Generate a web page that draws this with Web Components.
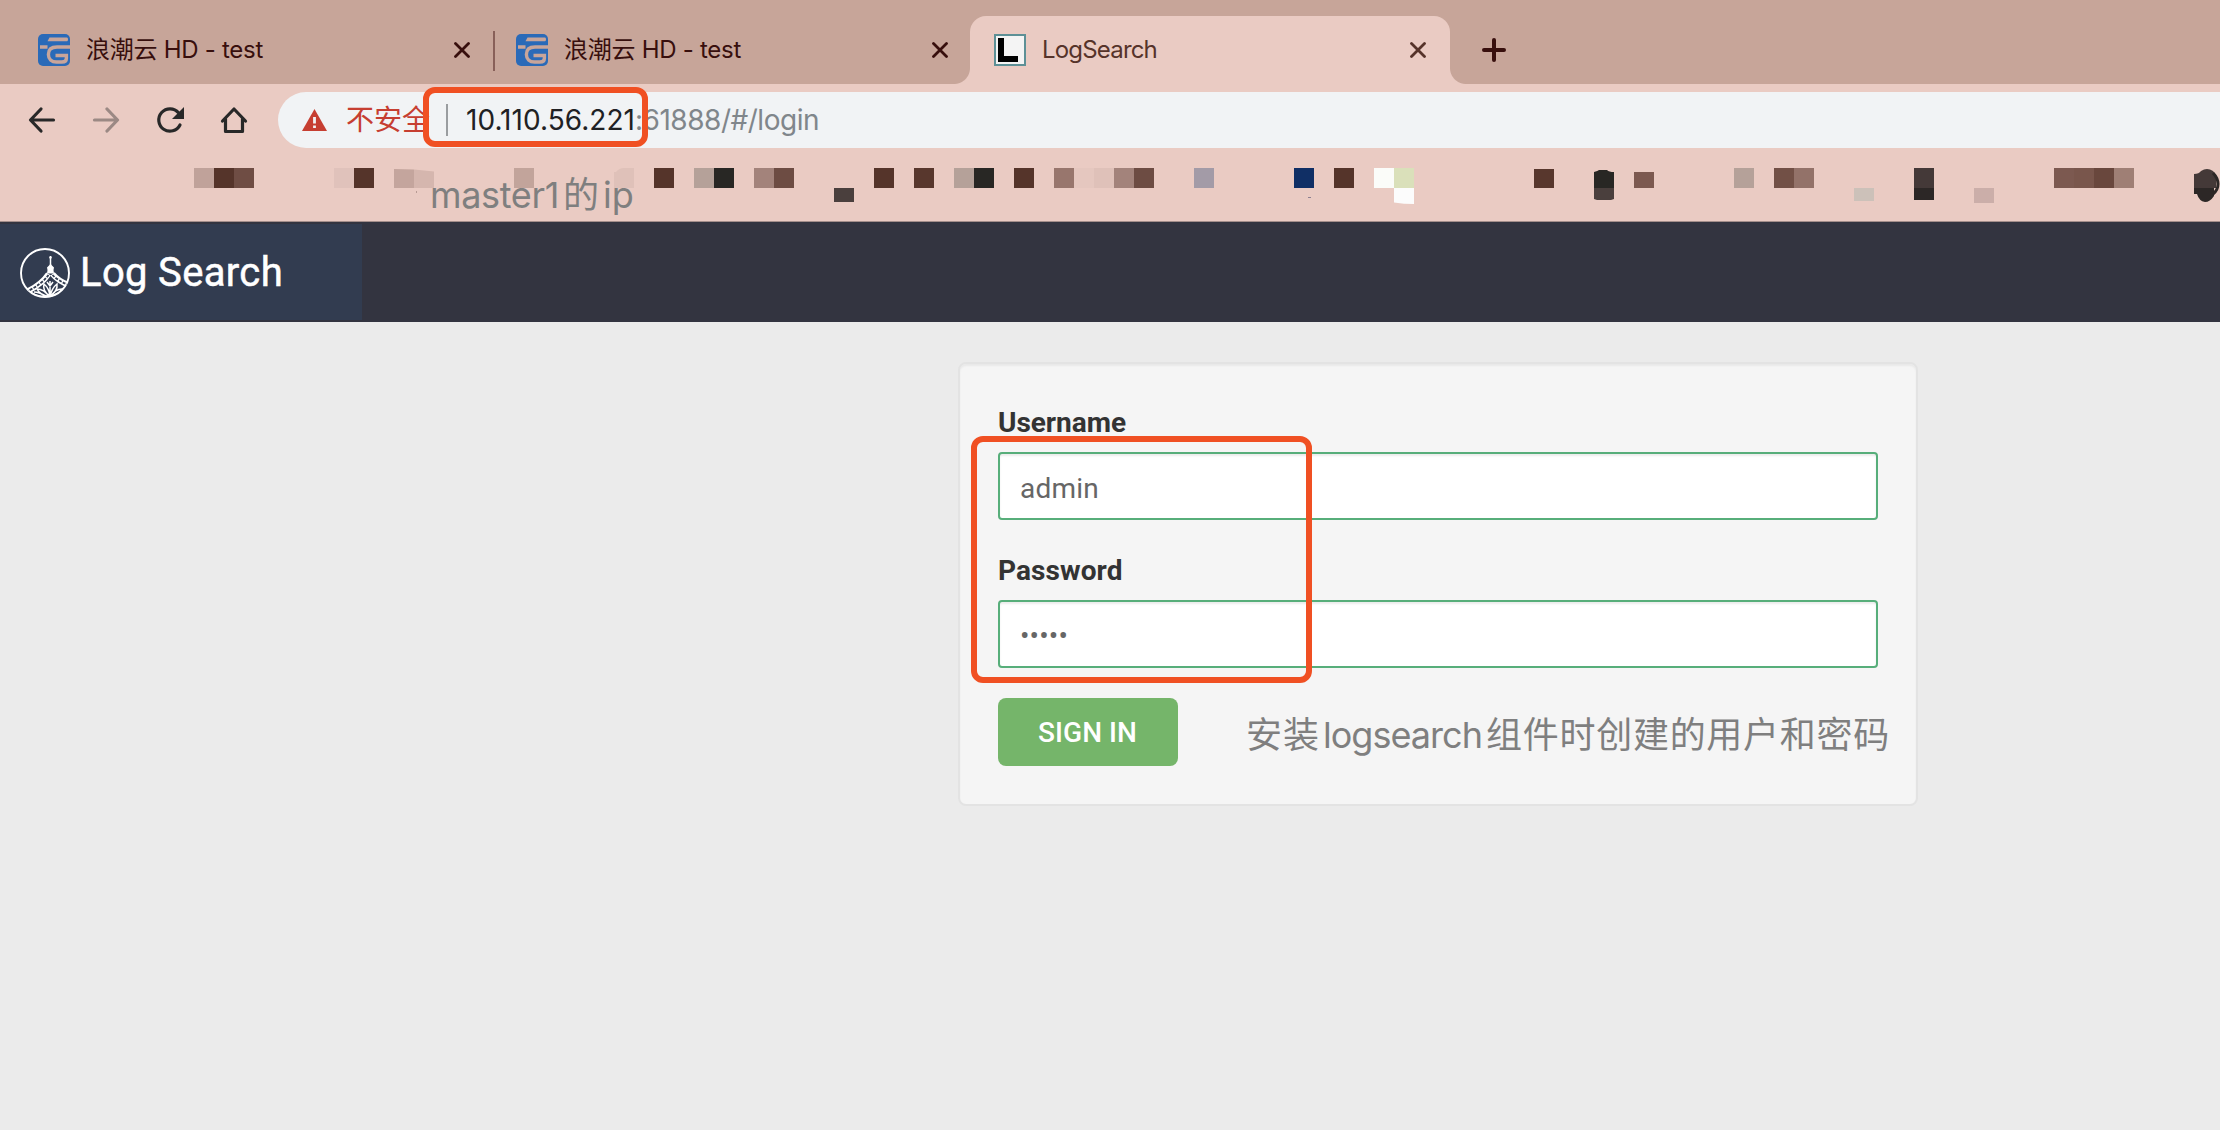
<!DOCTYPE html>
<html lang="zh-CN">
<head>
<meta charset="utf-8">
<title>LogSearch</title>
<style>
html,body{margin:0;height:100%;overflow:hidden;background:#ebebeb}
body{font-family:Inter,"Noto Sans CJK SC",sans-serif}
</style>
</head>
<body>
<log-search-screen></log-search-screen>
<script>
const define = (name, css, html, setup) => {
  const t = document.createElement('template');
  t.innerHTML = `<style>${css}</style>${html}`;
  customElements.define(name, class extends HTMLElement {
    connectedCallback() {
      if (this.shadowRoot) return;
      this.attachShadow({mode: 'open'}).append(t.content.cloneNode(true));
      if (setup) setup(this, this.shadowRoot);
    }
  });
};

/* Text run tracked out to the width given in its "w" attribute. */
define('fit-text', ':host{display:inline-block;white-space:pre;flex:none}', '<slot></slot>', el => {
  const w = parseFloat(el.getAttribute('w'));
  const n = [...el.textContent].length;
  const own = el.getBoundingClientRect().width;
  if (w && own) { el.style.letterSpacing = ((w - own) / n) + 'px'; el.style.width = w + 'px'; }
});

define('cloud-icon', ':host{display:block;width:32px;height:32px;flex:none}svg{display:block}',
 `<svg width="32" height="32" viewBox="0 0 32 32"><rect width="32" height="32" rx="5" fill="#2a6ab8"/>
  <g fill="none" stroke="#c8a59a" stroke-width="3.4"><path d="M2 13H9.5M32 13H19C13 13 10.4 16 10.4 20.500S13.500 28 18.500 28H24C27 28 28.400 26.500 28.400 24.200V21.500H17.500"/></g>
  <path d="M11.500 3.500H29Q30 3.500 30 5.300T29 7.200H9.500Z" fill="#c8a59a"/></svg>`);

define('letter-icon', ':host{display:block;width:32px;height:32px;flex:none}svg{display:block}',
 `<svg width="32" height="32" viewBox="0 0 32 32"><rect x="1" y="1" width="30" height="30" fill="#f4f4f4" stroke="#5d9096" stroke-width="2"/><path d="M4 4H10V22H24V28H4Z" fill="#000"/></svg>`);

define('browser-tab', `
 :host{display:flex;align-items:center;box-sizing:border-box;height:68px;flex:none;color:#380f0d;font-size:24px;line-height:68px;position:relative}
 :host([active]){background:#eacbc3;border-radius:16px 16px 0 0;color:#56332a}
 .foot{display:none;position:absolute;bottom:0;width:16px;height:16px}
 :host([active]) .foot{display:block}
 .l{left:-16px;background:radial-gradient(circle at 0 0,transparent 15.5px,#eacbc3 16.5px)}
 .r{right:-16px;background:radial-gradient(circle at 100% 0,transparent 15.5px,#eacbc3 16.5px)}
 .x{margin-left:auto;display:block}`,
 `<slot></slot><svg class="x" width="16" height="16" viewBox="0 0 16 16"><path d="M1.500 1.500L14.500 14.500M14.500 1.500L1.500 14.500" stroke="currentColor" stroke-width="2.800" stroke-linecap="round"/></svg><i class="foot l"></i><i class="foot r"></i>`);

define('tab-strip', `
 :host{display:flex;align-items:flex-end;height:84px;background:#c7a599}
 browser-tab{padding:0 24px 0 24px}
 .first{width:493px;padding-left:38px;padding-right:23px}
 .second{width:477px;padding-left:23px;padding-right:22px}
 .third{width:480px}
 .sep{width:2px;height:40px;background:#886059;flex:none;margin:0 -2px 13px 0;z-index:1}
 .plus{margin:0 0 22px 32px}`,
 `<browser-tab class="first"><cloud-icon></cloud-icon><fit-text w="177" style="margin-left:16px">浪潮云 HD - test</fit-text></browser-tab>
  <i class="sep"></i>
  <browser-tab class="second"><cloud-icon></cloud-icon><fit-text w="177" style="margin-left:16px">浪潮云 HD - test</fit-text></browser-tab>
  <browser-tab class="third" active><letter-icon></letter-icon><fit-text w="115" style="margin-left:16px">LogSearch</fit-text></browser-tab>
  <svg class="plus" width="24" height="24" viewBox="0 0 24 24"><path d="M12 2V22M2 12H22" stroke="#380f0d" stroke-width="4" stroke-linecap="round"/></svg>`);

define('address-bar', `
 :host{display:flex;align-items:center;flex:1;height:56px;box-sizing:border-box;padding-left:24px;background:#f1f3f5;border-radius:28px 0 0 28px;font-size:28px;line-height:56px;color:#202124}
 .warn{color:#c63e31;margin-left:19px}
 .rest{color:#80868b}
 .sep{width:2px;height:32px;background:#9a9da0;margin:0 18px 0 16px}`,
 `<svg width="25" height="22" viewBox="0 0 25 22"><path d="M12.500 0L25 22H0Z" fill="#c63e31"/><path d="M12.500 8V14.500M12.500 16.500V19" stroke="#f1f3f5" stroke-width="2.800"/></svg>
  <fit-text class="warn" w="84">不安全</fit-text><i class="sep"></i>
  <fit-text w="169">10.110.56.221</fit-text><fit-text class="rest" w="184">:61888/#/login</fit-text>`);

define('nav-bar', `
 :host{display:flex;align-items:center;height:72px;background:#eacbc3;padding-left:24px}
 svg{display:block;margin-right:28px;flex:none}
 address-bar{margin-left:-2px}
 path.s{fill:none;stroke:#282828;stroke-width:3.200;stroke-linecap:round;stroke-linejoin:round}`,
 `<svg width="36" height="36" viewBox="0 0 36 36"><path class="s" d="M29.500 18H7M17 7L6.500 18L17 29"/></svg>
  <svg width="36" height="36" viewBox="0 0 36 36" opacity=".4"><path class="s" d="M6.500 18H29M19 7L29.500 18L19 29"/></svg>
  <svg width="36" height="36" viewBox="0 0 36 36"><path class="s" d="M28 23A11.200 11.200 0 1 1 26.500 10.700"/><path d="M32 5V17H20Z" fill="#282828"/></svg>
  <svg width="36" height="36" viewBox="0 0 36 36"><path class="s" d="M6.500 19L18 7L29.500 19M9.500 17V29.500H26.500V17" stroke-linejoin="miter"/></svg>
  <address-bar></address-bar>`);

/* Bookmarks hidden behind 20px mosaic tiles: x, colour, y, height. */
define('bookmark-bar', ':host{display:block;height:65px;background:#eacbc3;border-bottom:1px solid #a48e8b}svg{display:block}',
 '<svg width="2220" height="65" viewBox="0 156 2220 65"></svg>', (el, root) => {
  const tiles = [
   [194,'#c0a29a'],[214,'#55342a'],[234,'#6f4d44'],[334,'#e0c2bb'],[354,'#55342a'],
   [514,'#c2a49b'],[654,'#55342a'],[694,'#b5a199'],[714,'#282724'],[754,'#a3837b'],[774,'#6d4c43'],
   [834,'#4a3f3d',188,14],[874,'#55342a'],[914,'#58372d'],[954,'#b5a199'],[974,'#282724'],[1014,'#55342a'],[1054,'#98766d'],
   [1074,'#e5c7bf'],[1094,'#dfc1b9'],[1114,'#a3837b'],[1134,'#6d4c43'],[1194,'#a39ba7'],[1294,'#102f65'],[1334,'#55342a'],
   [1374,'#fbfcf9'],[1394,'#dae0ba'],[1534,'#58372d',169,19],[1634,'#7c5950',172,16],[1734,'#b5a199'],[1774,'#725046'],[1794,'#937269'],
   [1854,'#ccc1b9',188,13],[1914,'#443938'],[1914,'#2c2726',188,12],[1974,'#cbaea9',188,15],[2054,'#7c5950'],[2074,'#79564c'],[2094,'#69473d'],[2114,'#9f7f75']];
  const svg = root.querySelector('svg');
  svg.innerHTML = tiles.map(([x,c,y=168,h=20]) => `<rect x="${x}" y="${y}" width="20" height="${h}" fill="${c}"/>`).join('') +
   `<path d="M394 169l20 .5V188h-20z" fill="#c4a59d"/><path d="M414 169.500l20 2V188h-20z" fill="#d5b6ae"/>
    <path d="M614 172l2 0q3-4 8-4h10v20h-20z" fill="#dfc1b9"/>
    <path d="M1394 188h20v16q-10 0-20-1.500z" fill="#fcfcfc"/>
    <path d="M1594 172q4-1 5-2h8q2 2 7 2v16h-20z" fill="#282724"/><path d="M1594 188h20v11l-3 1h-14l-3-1z" fill="#4a3f3d"/>
    <path d="M1308 197.500h3" stroke="#8d7f90"/><path d="M416.500 191v2" stroke="#b89b94"/>
    <path d="M2194 174q5 0 7-3 6-4 12 0l3 4v13h-22z" fill="#443938"/><path d="M2194 188h20v8q-4 6-9 6-6-1-8-8h-3z" fill="#2c2726"/>
    <path d="M2213 173q5 5 5 11t-5 10" fill="none" stroke="#2c2726" stroke-width="3"/>`;
 });

define('app-logo', ':host{display:block;width:50px;height:50px}svg{display:block}',
 `<svg width="50" height="50" viewBox="0 0 50 50" fill="none" stroke="#fff">
  <defs><clipPath id="c"><circle cx="25" cy="25" r="24.500"/></clipPath></defs>
  <circle cx="25" cy="25" r="24" stroke-width="1.900"/>
  <path d="M30.500 8V18" stroke-width="1.500"/><circle cx="30.500" cy="9.500" r="1.200" fill="#fff" stroke="none"/>
  <path d="M30.500 15Q31 17.500 34 19.500Q33 21.500 34 25.500H27Q28 21.500 27 19.500Q30 17.500 30.500 15Z" fill="#fff" stroke="none"/>
  <g clip-path="url(#c)">
   <path d="M28.500 26Q22 36 8 43M32.500 26Q38 33 50 37.500" stroke-width="5.600"/>
   <path d="M28.500 27Q22 36 8 43M32.500 27Q38 33 50 37.500" stroke="#323c50" stroke-width="1.800" stroke-dasharray="3 1.300"/>
   <path d="M30 33V49M30 48Q22 43 24 36Q29 40 30 48Q38 43 37 36Q32 40 30 48M29 48.500Q20 47 17 41Q24 41 29 48.500M31 48.500Q39 47 42 41Q35 41 31 48.500M14 44Q20 44 24 48M27 34L30 38L33 34" stroke-width="1.500"/>
   <path d="M9 44Q18 49 25 49T41 44" stroke-width="1.800"/>
  </g></svg>`);

define('app-header', `
 :host{display:flex;align-items:center;height:100px;background:#333440}
 .brand{display:flex;align-items:center;box-sizing:border-box;width:362px;height:96px;padding-left:20px;gap:10px;background:#323c50;color:#fff;font:400 40px/96px Roboto,sans-serif;-webkit-text-stroke:.5px #fff}
 app-logo{margin-top:2px}
 fit-text{padding-top:2px}`,
 `<div class="brand"><app-logo></app-logo><fit-text w="203">Log Search</fit-text></div>`);

define('form-field', `
 :host{display:block}
 label{display:block;font-weight:700;line-height:42px;color:#333;margin-bottom:8px}
 .box{box-sizing:border-box;height:68px;border:2px solid #57ae7a;border-radius:4px;background:#fff;color:#666;padding:2px 20px 0;line-height:64px;box-shadow:inset 0 2px 2px rgba(0,0,0,.075)}
 ::slotted(.name){padding-top:1px}`,
 `<label><slot name="label"></slot></label><div class="box"><slot></slot></div>`);

define('login-card', `
 :host{display:flex;flex-direction:column;box-sizing:border-box;width:960px;height:444px;padding:38px 38px 0;border:2px solid #e3e3e3;border-radius:8px;background:#f5f5f5;box-shadow:inset 0 2px 2px rgba(0,0,0,.05);font:400 28px Roboto,sans-serif}
 form-field+form-field{margin-top:30px}
 button{margin-top:30px;width:180px;height:68px;border:0;border-radius:8px;padding:1px 1px 0 0;background:#75b56a;color:#fff;font:500 28px/67px Roboto,sans-serif}`,
 `<form-field><fit-text slot="label" w="128">Username</fit-text><fit-text class="name" w="79">admin</fit-text></form-field>
  <form-field><fit-text slot="label" w="124.500">Password</fit-text><fit-text w="48">•••••</fit-text></form-field>
  <button><fit-text w="99">SIGN IN</fit-text></button>`);

/* Reviewer's marks laid over the screen. */
define('mark-box', ':host{display:block;position:absolute;box-sizing:border-box;border:6px solid #f05023;border-radius:12px}', '');
define('mark-note', ':host{display:flex;position:absolute;color:#7f7f7f;font:400 36px/40px Inter,"Noto Sans CJK SC",sans-serif;white-space:nowrap}', '<slot></slot>');

define('log-search-screen', `
 :host{display:flex;flex-direction:column;position:relative;width:2220px;height:1130px;background:#ebebeb;overflow:hidden}
 main{display:flex;flex:1;align-items:flex-start;padding:40px 0 0 958px}
 .ip{left:423px;top:87px;width:225px;height:60px}
 .login{left:970.500px;top:436px;width:341px;height:247px}
 .n1{left:430px;top:175px}
 .n2{left:1246px;top:715px}`,
 `<tab-strip></tab-strip><nav-bar></nav-bar><bookmark-bar></bookmark-bar><app-header></app-header>
  <main><login-card></login-card></main>
  <mark-box class="ip"></mark-box><mark-box class="login"></mark-box>
  <mark-note class="n1"><fit-text w="129">master1</fit-text><fit-text w="36" style="margin-left:4px">的</fit-text><fit-text w="31" style="margin-left:4px">ip</fit-text></mark-note>
  <mark-note class="n2"><fit-text w="74">安装</fit-text><fit-text w="159" style="margin-left:3px">logsearch</fit-text><fit-text w="404" style="margin-left:4px">组件时创建的用户和密码</fit-text></mark-note>`);
</script>
</body>
</html>
